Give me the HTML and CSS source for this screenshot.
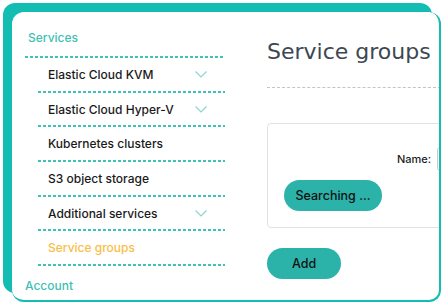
FILE: index.html
```html
<!DOCTYPE html>
<html lang="en">
<head>
  <meta charset="UTF-8" />
  <title>Service groups</title>
  <link rel="stylesheet" href="styles.css">
</head>
<body>

<div class="card">
  <nav class="sidebar">
    <div class="section">Services</div>
    <ul class="menu">
      <li class="item">Elastic Cloud KVM <svg class="chevron" viewBox="0 0 12 7"><polyline points="0.5,0.5 6,6 11.5,0.5" /></svg></li>
      <li class="item">Elastic Cloud Hyper-V <svg class="chevron" viewBox="0 0 12 7"><polyline points="0.5,0.5 6,6 11.5,0.5" /></svg></li>
      <li class="item">Kubernetes clusters</li>
      <li class="item">S3 object storage</li>
      <li class="item">Additional services <svg class="chevron" viewBox="0 0 12 7"><polyline points="0.5,0.5 6,6 11.5,0.5" /></svg></li>
      <li class="item active">Service groups</li>
    </ul>
    <div class="section account">Account</div>
  </nav>

  <main class="content">
    <h1>Service groups</h1>
    <div class="rule"></div>

    <div class="panel">
      <div class="field">
        <label for="name">Name:</label>
        <input type="text" id="name" />
      </div>
      <button class="btn">Searching ...</button>
    </div>

    <button class="btn add">Add</button>
  </main>
</div>

</body>
</html>
```

FILE: styles.css
```css
body {
  margin: 0;
  background: white;
  font-family: Inter, "Noto Sans", sans-serif;
}
.card {
  box-sizing: border-box;
  margin: 12px 0 0 12px;
  width: 429px;
  height: 290px;
  background: white;
  border-right: 2px solid #14bdb1;
  border-bottom: 2px solid #14bdb1;
  border-radius: 12px;
  box-shadow: -9px -9px 0 #14bdb1;
  overflow: hidden;
  display: flex;
}
.sidebar {
  flex: 0 0 213px;
  padding: 16px 0 0 13px;
  box-sizing: border-box;
}
.section {
  color: #3fbfb5;
  font-size: 12px;
  font-weight: 500;
  line-height: 20px;
  padding: 0 0 10px 3px;
  background: repeating-linear-gradient(to right, #3fc1b7 0 3px, transparent 3px 5px) bottom / 100% 2px no-repeat;
}
.section.account {
  background: none;
  padding: 10px 0 0 0;
}
.menu {
  list-style: none;
  margin: 0 0 0 13px;
  padding: 0;
}
.item {
  height: 34.7px;
  box-sizing: border-box;
  padding: 0 18px 2px 10px;
  display: flex;
  align-items: center;
  justify-content: space-between;
  font-size: 12px;
  font-weight: 500;
  color: #1a1a1a;
  background: repeating-linear-gradient(to right, #3fc1b7 0 3px, transparent 3px 5px) bottom / 100% 2px no-repeat;
}
.item.active {
  color: #fbbd45;
}
.chevron {
  width: 12px;
  height: 7px;
  fill: none;
  stroke: #8ad6d0;
  stroke-width: 1.2;
}
.content {
  flex: 0 0 320px;
  padding: 27px 0 0 42px;
  box-sizing: border-box;
}
h1 {
  margin: 0;
  font-family: "DejaVu Sans", sans-serif;
  font-weight: normal;
  font-size: 22px;
  line-height: 26px;
  color: #3c4752;
  white-space: nowrap;
}
.rule {
  margin-top: 22px;
  border-top: 1px dashed #c4c4c4;
}
.panel {
  margin-top: 35px;
  height: 105px;
  box-sizing: border-box;
  border: 1px solid #e2e2e2;
  border-radius: 4px;
  padding: 25px 0 0 16px;
}
.field {
  display: flex;
  align-items: center;
  gap: 6px;
  padding-left: 113px;
  height: 20px;
}
.field label {
  font-size: 11px;
  font-weight: 500;
  color: #1c1c1c;
  white-space: nowrap;
}
.field input {
  flex: 0 0 120px;
  height: 22px;
  border: 1px solid #c8c8c8;
  border-radius: 3px;
  padding: 0;
}
.btn {
  display: block;
  margin-top: 11px;
  background: #2bb3a9;
  color: #111;
  border: none;
  border-radius: 16px;
  height: 31px;
  width: 98px;
  font-family: Inter, "Noto Sans", sans-serif;
  font-size: 12.5px;
  font-weight: 500;
  cursor: pointer;
}
.btn.add {
  margin-top: 20px;
  width: 74px;
}
```
